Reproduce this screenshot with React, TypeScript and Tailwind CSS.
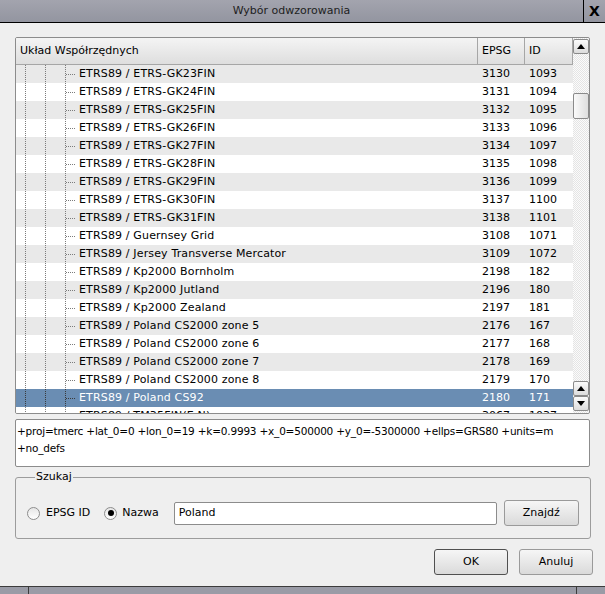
import React from "react";

const rows: [string, string, string][] = [
  ["ETRS89 / ETRS-GK23FIN", "3130", "1093"],
  ["ETRS89 / ETRS-GK24FIN", "3131", "1094"],
  ["ETRS89 / ETRS-GK25FIN", "3132", "1095"],
  ["ETRS89 / ETRS-GK26FIN", "3133", "1096"],
  ["ETRS89 / ETRS-GK27FIN", "3134", "1097"],
  ["ETRS89 / ETRS-GK28FIN", "3135", "1098"],
  ["ETRS89 / ETRS-GK29FIN", "3136", "1099"],
  ["ETRS89 / ETRS-GK30FIN", "3137", "1100"],
  ["ETRS89 / ETRS-GK31FIN", "3138", "1101"],
  ["ETRS89 / Guernsey Grid", "3108", "1071"],
  ["ETRS89 / Jersey Transverse Mercator", "3109", "1072"],
  ["ETRS89 / Kp2000 Bornholm", "2198", "182"],
  ["ETRS89 / Kp2000 Jutland", "2196", "180"],
  ["ETRS89 / Kp2000 Zealand", "2197", "181"],
  ["ETRS89 / Poland CS2000 zone 5", "2176", "167"],
  ["ETRS89 / Poland CS2000 zone 6", "2177", "168"],
  ["ETRS89 / Poland CS2000 zone 7", "2178", "169"],
  ["ETRS89 / Poland CS2000 zone 8", "2179", "170"],
  ["ETRS89 / Poland CS92", "2180", "171"],
  ["ETRS89 / TM35FIN(E,N)", "3067", "1037"],
];

const SELECTED = 18;

const TreeGuides = ({ selected }: { selected: boolean }) => {
  const c = selected ? "#3a3a3a" : "#7c7c7c";
  return (
    <svg width="63" height="18" className="shrink-0">
      <line x1="9.5" y1="0" x2="9.5" y2="18" stroke={c} strokeDasharray="1 1" />
      <line x1="29.5" y1="0" x2="29.5" y2="18" stroke={c} strokeDasharray="1 1" />
      <line x1="49.5" y1="0" x2="49.5" y2="18" stroke={c} strokeDasharray="1 1" />
      <line x1="50" y1="9.5" x2="60" y2="9.5" stroke={c} strokeDasharray="1 1" />
    </svg>
  );
};

const Arrow = ({ down }: { down?: boolean }) => (
  <svg width="8" height="5" viewBox="0 0 8 5">
    {down ? <polygon points="0,0 8,0 4,5" fill="#000" /> : <polygon points="0,5 8,5 4,0" fill="#000" />}
  </svg>
);

const ScrollButton = ({ down }: { down?: boolean }) => (
  <div className="h-[15px] w-[16px] flex items-center justify-center rounded-[2px] border border-[#8a8a8a] bg-gradient-to-b from-[#fbfbfb] to-[#dcdcdc]">
    <Arrow down={down} />
  </div>
);

const Radio = ({ checked }: { checked?: boolean }) => (
  <span className="shrink-0 w-[13px] h-[13px] rounded-full border border-[#8d8d8d] bg-gradient-to-b from-[#e6e6e6] to-white flex items-center justify-center">
    {checked && <span className="w-[6px] h-[6px] rounded-full bg-black" />}
  </span>
);

const Button = ({ label, strong, className }: { label: string; strong?: boolean; className: string }) => (
  <button
    className={`${className} shrink-0 h-[26px] rounded-[3px] border ${strong ? "border-[#505050]" : "border-[#9a9a9a]"} bg-gradient-to-b from-[#f6f6f6] to-[#dadada] text-[11px] text-black`}
  >
    {label}
  </button>
);

export default function App() {
  return (
    <div className="w-[605px] h-[594px] bg-[#efefef] flex flex-col font-['DejaVu_Sans',sans-serif] text-[11px] text-black overflow-hidden">
      {/* title bar */}
      <div className="h-[23px] flex border-b border-black bg-gradient-to-b from-[#a3a4ae] to-[#9395a0] shrink-0">
        <div className="flex-1 flex items-center justify-center text-[#1e1e1e]">Wybór odwzorowania</div>
        <div className="w-[22px] border-l border-black flex items-center justify-center font-bold text-[14px]">X</div>
      </div>

      <div className="flex flex-col px-[15px] pt-[14px]">
        {/* table */}
        <div className="h-[377px] flex border border-[#8c8c8c] rounded-[2px] bg-white overflow-hidden">
          <div className="w-[557px] flex flex-col">
            <div className="h-[27px] flex shrink-0 border-b border-[#a6a6a6] bg-gradient-to-b from-[#f4f4f4] to-[#dedede]">
              <div className="w-[462px] pl-[4px] flex items-center border-r border-[#a6a6a6]">Układ Współrzędnych</div>
              <div className="w-[47px] pl-[4px] flex items-center border-r border-[#a6a6a6]">EPSG</div>
              <div className="w-[48px] pl-[4px] flex items-center border-r border-[#a6a6a6]">ID</div>
            </div>
            {rows.map((r, i) => {
              const sel = i === SELECTED;
              const bg = sel ? "bg-[#6a8db3] text-white" : i % 2 === 0 ? "bg-[#e9e9e9]" : "bg-white";
              return (
                <div key={i} className={`h-[18px] shrink-0 flex items-center ${bg}`}>
                  <div className="w-[462px] flex items-center">
                    <TreeGuides selected={sel} />
                    <span className="tracking-[0.15px]">{r[0]}</span>
                  </div>
                  <div className="w-[47px] pl-[4px]">{r[1]}</div>
                  <div className="w-[48px] pl-[4px]">{r[2]}</div>
                </div>
              );
            })}
          </div>
          {/* scrollbar */}
          <div className="w-[16px] flex flex-col bg-[repeating-conic-gradient(#e4e4e4_0_25%,#fbfbfb_0_50%)] bg-[length:2px_2px]">
            <div className="mt-[1px]">
              <ScrollButton />
            </div>
            <div className="mt-[39px] h-[26px] rounded-[2px] border border-[#8a8a8a] bg-gradient-to-r from-[#fafafa] to-[#dedede]" />
            <div className="flex-1" />
            <ScrollButton />
            <div className="mb-[2px]">
              <ScrollButton down />
            </div>
          </div>
        </div>

        {/* proj string */}
        <div className="mt-[5px] h-[48px] border border-[#8c8c8c] rounded-[2px] bg-white pl-[1px] pt-[3px] leading-[17px] text-[10.5px] tracking-[-0.2px]">
          +proj=tmerc +lat_0=0 +lon_0=19 +k=0.9993 +x_0=500000 +y_0=-5300000 +ellps=GRS80 +units=m
          <br />
          +no_defs
        </div>

        {/* search group */}
        <fieldset className="mt-[3px] border border-[#9c9c9c] rounded-[3px] pl-[11px] pr-[11px] pt-[16px] pb-[12px]">
          <legend className="ml-[8px] px-[1px] leading-[14px]">Szukaj</legend>
          <div className="flex items-center h-[26px] whitespace-nowrap">
            <Radio />
            <span className="ml-[6px]">EPSG ID</span>
            <span className="ml-[14px]">
              <Radio checked />
            </span>
            <span className="ml-[5px]">Nazwa</span>
            <div className="ml-[15px] w-[323px] shrink-0 h-[23px] rounded-[2px] border border-[#8c8c8c] bg-white flex items-center pl-[4px]">
              Poland
            </div>
            <Button label="Znajdź" className="ml-[7px] w-[75px]" />
          </div>
        </fieldset>

        {/* dialog buttons */}
        <div className="mt-[10px] flex justify-end gap-[11px] -mr-[3px]">
          <Button label="OK" strong className="w-[74px]" />
          <Button label="Anuluj" className="w-[74px]" />
        </div>
      </div>

      <div className="flex-1" />
      {/* bottom frame */}
      <div className="h-[8px] shrink-0 flex border-t border-[#3c3c3c] bg-[#9a9ba6]">
        <div className="w-[29px] border-r border-[#3c3c3c]" />
        <div className="flex-1" />
        <div className="w-[29px] border-l border-[#3c3c3c]" />
      </div>
    </div>
  );
}
